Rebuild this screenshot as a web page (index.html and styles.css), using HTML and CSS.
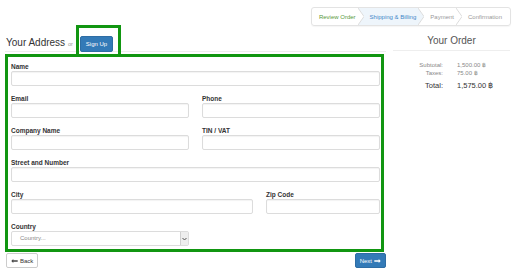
FILE: index.html
```html
<!DOCTYPE html>
<html lang="en">
<head>
    <meta charset="UTF-8">
    <meta name="viewport" content="width=device-width, initial-scale=1.0">
    <title>Checkout - Shipping &amp; Billing</title>
    <link rel="stylesheet" href="styles.css">
</head>
<body>
    <div class="topbar">
        <nav class="steps">
            <span class="step done">Review Order</span>
            <svg class="sep sep-before" width="6" height="17" viewBox="0 0 6 17">
                <polygon points="0,0 6,0 6,17 0,17 6,8.5" fill="#eef5fb"/>
                <polyline points="0,0 6,8.5 0,17" fill="none" stroke="#ddd" stroke-width="1"/>
            </svg>
            <span class="step active">Shipping &amp; Billing</span>
            <svg class="sep" width="6" height="17" viewBox="0 0 6 17">
                <polygon points="0,0 6,8.5 0,17" fill="#eef5fb"/>
                <polyline points="0,0 6,8.5 0,17" fill="none" stroke="#ddd" stroke-width="1"/>
            </svg>
            <span class="step">Payment</span>
            <svg class="sep" width="6" height="17" viewBox="0 0 6 17">
                <polyline points="0,0 6,8.5 0,17" fill="none" stroke="#ddd" stroke-width="1"/>
            </svg>
            <span class="step last">Confirmation</span>
        </nav>
    </div>

    <div class="main">
        <!-- Address form -->
        <div class="address">
            <div class="address-head">
                <h2>Your Address <small>or</small></h2>
                <span class="mark signup-mark">
                    <button type="button" class="btn btn-primary">Sign Up</button>
                </span>
            </div>

            <form class="mark form-box" onsubmit="return false;">
                <div class="field">
                    <label for="name">Name</label>
                    <input type="text" id="name">
                </div>
                <div class="row">
                    <div class="field">
                        <label for="email">Email</label>
                        <input type="text" id="email">
                    </div>
                    <div class="field">
                        <label for="phone">Phone</label>
                        <input type="text" id="phone">
                    </div>
                </div>
                <div class="row">
                    <div class="field">
                        <label for="company">Company Name</label>
                        <input type="text" id="company">
                    </div>
                    <div class="field">
                        <label for="vat">TIN / VAT</label>
                        <input type="text" id="vat">
                    </div>
                </div>
                <div class="field">
                    <label for="street">Street and Number</label>
                    <input type="text" id="street">
                </div>
                <div class="row row-city">
                    <div class="field">
                        <label for="city">City</label>
                        <input type="text" id="city">
                    </div>
                    <div class="field">
                        <label for="zip">Zip Code</label>
                        <input type="text" id="zip">
                    </div>
                </div>
                <div class="row">
                    <div class="field last">
                        <label>Country</label>
                        <div class="select">
                            <span class="select-text">Country...</span>
                            <span class="select-arrow">
                                <svg width="5" height="4" viewBox="0 0 5 4"><polyline points="0.5,1 2.5,3 4.5,1" fill="none" stroke="#555" stroke-width="1"/></svg>
                            </span>
                        </div>
                    </div>
                </div>
            </form>

            <div class="actions">
                <button type="button" class="btn btn-default">
                    <svg width="7" height="4" viewBox="0 0 8 5"><polygon points="0,2.5 2.5,0 2.5,1.7 8,1.7 8,3.3 2.5,3.3 2.5,5" fill="#444"/></svg>
                    Back
                </button>
                <button type="button" class="btn btn-primary btn-next">
                    Next
                    <svg width="7" height="4" viewBox="0 0 8 5"><polygon points="8,2.5 5.5,0 5.5,1.7 0,1.7 0,3.3 5.5,3.3 5.5,5" fill="#fff"/></svg>
                </button>
            </div>
        </div>

        <!-- Order summary -->
        <aside class="order">
            <h3>Your Order</h3>
            <div class="totals">
                <span class="t-label">Subtotal:</span><span class="t-value">1,500.00 ฿</span>
                <span class="t-label">Taxes:</span><span class="t-value">75.00 ฿</span>
                <span class="t-label total">Total:</span><span class="t-value total">1,575.00 ฿</span>
            </div>
        </aside>
    </div>
</body>
</html>
```

FILE: styles.css
```css
body {
    margin: 0;
    font-family: "Liberation Sans", Arial, sans-serif;
    color: #333;
    background-color: #fff;
}

/* progress steps */
.topbar {
    display: flex;
    justify-content: flex-end;
    padding: 7px 4px 0 0;
}

.steps {
    display: flex;
    align-items: stretch;
    height: 17px;
    border: 1px solid #e3e3e3;
    border-radius: 3px;
    box-shadow: 0 1px 1px rgba(0, 0, 0, 0.04);
    overflow: hidden;
}

.step {
    display: flex;
    align-items: center;
    padding: 0 2px 0 6px;
    font-size: 6px;
    color: #999;
}

.step.done {
    padding-left: 7px;
    color: #5a9a3c;
}

.step.active {
    color: #3f86c8;
    background-color: #eef5fb;
}

.step.last {
    padding-right: 8px;
}

.sep {
    display: block;
    flex-shrink: 0;
}

/* layout */
.main {
    display: grid;
    grid-template-columns: 1fr 117px;
    column-gap: 7px;
    padding: 0 5px;
}

.mark {
    border: 3px solid #119611;
}

.address-head {
    display: flex;
    align-items: flex-start;
    height: 25px;
    border-bottom: 1px solid #eee;
}

.address-head h2 {
    margin: 11px 0 0 1px;
    font-size: 10px;
    line-height: 12px;
    font-weight: normal;
    color: #333;
}

.address-head small {
    font-size: 5.5px;
    color: #999;
}

.signup-mark {
    display: block;
    margin: -1px 0 0 3px;
    padding: 4px 5px 2px 1px;
}

.btn {
    display: inline-flex;
    align-items: center;
    gap: 2px;
    height: 16px;
    padding: 0 5px;
    font-family: inherit;
    font-size: 6px;
    border-radius: 2px;
    cursor: pointer;
}

.btn-primary {
    color: #fff;
    background-color: #337ab7;
    border: 1px solid #2e6da4;
}

.btn-default {
    color: #333;
    background-color: #fff;
    border: 1px solid #ccc;
}

/* form */
.form-box {
    margin: 2px 2px 0 0;
    padding: 5px 1px 3px 3px;
}

.field {
    margin-bottom: 8px;
}

.field.last {
    margin-bottom: 0;
}

.field label {
    display: block;
    height: 9px;
    font-size: 6.5px;
    line-height: 9px;
    font-weight: bold;
    color: #333;
}

.field input {
    display: block;
    box-sizing: border-box;
    width: 100%;
    height: 15px;
    margin: 0;
    border: 1px solid #dcdcdc;
    border-radius: 2px;
    box-shadow: inset 0 1px 1px rgba(0, 0, 0, 0.05);
}

.row {
    display: grid;
    grid-template-columns: 1fr 1fr;
    column-gap: 13px;
}

.row-city {
    grid-template-columns: 242px 1fr;
}

.select {
    display: flex;
    box-sizing: border-box;
    height: 15px;
    border: 1px solid #dcdcdc;
    border-radius: 2px;
}

.select-text {
    flex: 1;
    padding-left: 8px;
    font-size: 6px;
    line-height: 13px;
    color: #888;
}

.select-arrow {
    display: flex;
    align-items: center;
    justify-content: center;
    width: 7px;
    background-color: #eee;
    border-left: 1px solid #d0d0d0;
}

.actions {
    display: flex;
    justify-content: space-between;
    margin-top: 1px;
}

.actions .btn {
    height: 15px;
    padding: 0 4px;
}

.actions .btn-default {
    margin-left: 1px;
}

/* order summary */
.order h3 {
    margin: 9px 0 0;
    padding-bottom: 3px;
    font-size: 10px;
    line-height: 12px;
    font-weight: normal;
    text-align: center;
    color: #555;
    border-bottom: 1px solid #eee;
}

.totals {
    display: grid;
    grid-template-columns: 50px 1fr;
    column-gap: 14px;
    margin-top: 10px;
    font-size: 6px;
    line-height: 8px;
    color: #888;
}

.t-label {
    text-align: right;
}

.totals .total {
    margin-top: 4px;
    font-size: 7.5px;
    line-height: 10px;
    color: #333;
}
```
